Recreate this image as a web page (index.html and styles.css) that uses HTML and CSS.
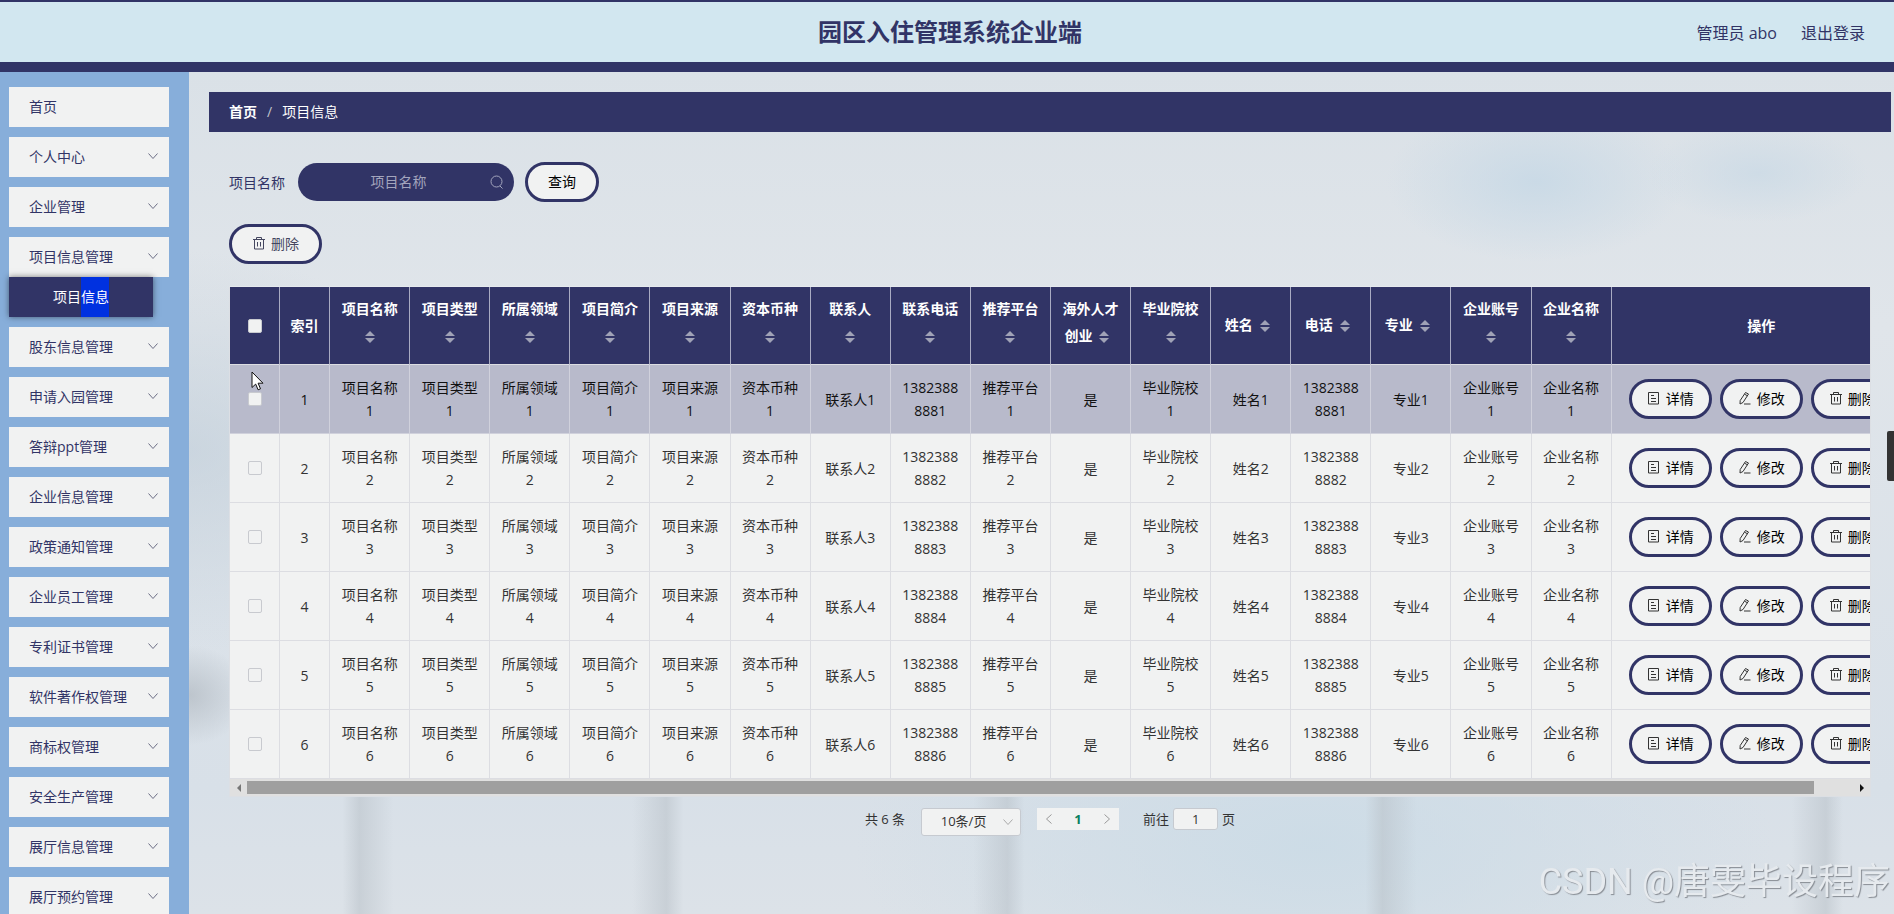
FILE: index.html
```html
<!DOCTYPE html>
<html lang="zh-CN">
<head>
    <meta charset="UTF-8">
    <meta name="viewport" content="width=device-width, initial-scale=1.0">
    <title>园区入住管理系统企业端</title>
    <link rel="stylesheet" href="styles.css">
</head>
<body>
    <svg class="sprite" aria-hidden="true">
      <symbol id="icon-arrow" viewBox="0 0 14 14"><path d="M2.5 4.5 7 9.5l4.5-5" fill="none" stroke="currentColor"/></symbol>
      <symbol id="icon-search" viewBox="0 0 14 14"><circle cx="6.5" cy="6.5" r="5.5" fill="none" stroke="currentColor"/><path d="m10 11 2.500 2.500" stroke="currentColor"/></symbol>
      <symbol id="icon-delete" viewBox="0 0 14 14"><path d="M1 3.500h12M4.500 3.500v-2h5v2M2.500 3.500v9.500h9V3.500M5.500 6v4.500M8.500 6v4.500" fill="none" stroke="currentColor"/></symbol>
      <symbol id="icon-detail" viewBox="0 0 14 14"><path d="M1.500 1.500h10v11.500h-10zM4 4.500h3M4 7.500h5M4 10.500h5" fill="none" stroke="currentColor"/></symbol>
      <symbol id="icon-edit" viewBox="0 0 14 14"><path d="M7.500 1.500 10.500 3 5 11.500 2 13l.2-3.500zM6.500 3.200l3 1.600M6 13h6.500" fill="none" stroke="currentColor"/></symbol>
    </svg>

    <header class="header">
      <h1 class="title">园区入住管理系统企业端</h1>
      <div class="user">
        <span>管理员 abo</span>
        <a href="#">退出登录</a>
      </div>
    </header>

    <div class="layout">
      <nav class="sidebar">
        <a class="menu-item" href="#">首页</a>
        <a class="menu-item" href="#">个人中心<svg class="icon"><use href="#icon-arrow"/></svg></a>
        <a class="menu-item" href="#">企业管理<svg class="icon"><use href="#icon-arrow"/></svg></a>
        <div class="menu-group">
          <a class="menu-item" href="#">项目信息管理<svg class="icon"><use href="#icon-arrow"/></svg></a>
          <a class="submenu-item" href="#">项目<span class="selected">信息</span></a>
        </div>
        <a class="menu-item" href="#">股东信息管理<svg class="icon"><use href="#icon-arrow"/></svg></a>
        <a class="menu-item" href="#">申请入园管理<svg class="icon"><use href="#icon-arrow"/></svg></a>
        <a class="menu-item" href="#">答辩ppt管理<svg class="icon"><use href="#icon-arrow"/></svg></a>
        <a class="menu-item" href="#">企业信息管理<svg class="icon"><use href="#icon-arrow"/></svg></a>
        <a class="menu-item" href="#">政策通知管理<svg class="icon"><use href="#icon-arrow"/></svg></a>
        <a class="menu-item" href="#">企业员工管理<svg class="icon"><use href="#icon-arrow"/></svg></a>
        <a class="menu-item" href="#">专利证书管理<svg class="icon"><use href="#icon-arrow"/></svg></a>
        <a class="menu-item" href="#">软件著作权管理<svg class="icon"><use href="#icon-arrow"/></svg></a>
        <a class="menu-item" href="#">商标权管理<svg class="icon"><use href="#icon-arrow"/></svg></a>
        <a class="menu-item" href="#">安全生产管理<svg class="icon"><use href="#icon-arrow"/></svg></a>
        <a class="menu-item" href="#">展厅信息管理<svg class="icon"><use href="#icon-arrow"/></svg></a>
        <a class="menu-item" href="#">展厅预约管理<svg class="icon"><use href="#icon-arrow"/></svg></a>
      </nav>

      <main class="main">
        <div class="breadcrumb">
          <a href="#">首页</a><span class="separator">/</span><span>项目信息</span>
        </div>

        <div class="content">
          <form class="search">
            <label for="name">项目名称</label>
            <div class="search-box">
              <input type="text" id="name" placeholder="项目名称">
              <svg class="icon"><use href="#icon-search"/></svg>
            </div>
            <button type="button" class="btn">查询</button>
          </form>

          <div class="toolbar">
            <button type="button" class="btn btn-plain"><svg class="icon"><use href="#icon-delete"/></svg>删除</button>
          </div>

          <div class="table-box">
            <div class="table-view">
              <table class="table">
                <colgroup>
                  <col class="col-small" span="2">
                  <col class="col-text" span="16">
                  <col class="col-action">
                </colgroup>
                <thead><tr id="table-head"></tr></thead>
                <tbody id="table-body"></tbody>
              </table>
            </div>
            <div class="scrollbar">
              <span class="scroll-arrow scroll-left"></span>
              <div class="scroll-track"><div class="scroll-thumb" style="width: 97.6%"></div></div>
              <span class="scroll-arrow scroll-right"></span>
            </div>
            <svg class="cursor" viewBox="0 0 13 20"><path d="M1 1v15.500l3.700-3.400 2.400 5.700 2.400-1-2.400-5.600h4.900z" fill="#fff" stroke="#111"/></svg>
          </div>

          <div class="pagination">
            <span class="total">共 6 条</span>
            <div class="page-size">
              <select aria-label="每页条数"><option>10条/页</option></select>
              <svg class="icon"><use href="#icon-arrow"/></svg>
            </div>
            <div class="pager">
              <button type="button" aria-label="上一页"><svg class="icon prev"><use href="#icon-arrow"/></svg></button>
              <button type="button" class="current">1</button>
              <button type="button" aria-label="下一页"><svg class="icon next"><use href="#icon-arrow"/></svg></button>
            </div>
            <div class="jump">
              <label for="page">前往</label>
              <input type="text" id="page" value="1">
              <span>页</span>
            </div>
          </div>
        </div>
      </main>
    </div>

    <div class="side-tab"></div>
    <div class="watermark">CSDN @唐雯毕设程序</div>

    <script>
      const columns = ['项目名称', '项目类型', '所属领域', '项目简介', '项目来源', '资本币种', '联系人', '联系电话',
        '推荐平台', '海外人才创业', '毕业院校', '姓名', '电话', '专业', '企业账号', '企业名称'];
      const actions = [['detail', '详情'], ['edit', '修改'], ['delete', '删除']];

      function cellText(column, n) {
        if (column === '联系电话' || column === '电话') return '1382388888' + n;
        if (column === '海外人才创业') return '是';
        return column + n;
      }

      document.getElementById('table-head').innerHTML =
        '<th><input type="checkbox" aria-label="全选"></th><th>索引</th>' +
        columns.map(c => `<th>${c}<span class="caret"></span></th>`).join('') +
        '<th>操作</th>';

      const buttons = actions.map(([icon, text]) =>
        `<button type="button" class="btn btn-small"><svg class="icon"><use href="#icon-${icon}"/></svg>${text}</button>`
      ).join('');

      document.getElementById('table-body').innerHTML = [1, 2, 3, 4, 5, 6].map(n =>
        `<tr class="${n === 1 ? 'hover' : ''}">
          <td><input type="checkbox" aria-label="选择第${n}行"></td><td>${n}</td>
          ${columns.map(c => `<td>${cellText(c, n)}</td>`).join('')}
          <td><div class="actions">${buttons}</div></td>
        </tr>`
      ).join('');
    </script>
</body>
</html>
```
FILE: styles.css
```css
* { box-sizing: border-box; }
body { margin: 0; height: 100vh; display: flex; flex-direction: column; overflow: hidden; font-family: "Open Sans", "Noto Sans CJK SC", sans-serif; font-size: 14px; color: #313466; }
a { color: inherit; text-decoration: none; }
button, input, select { font-family: inherit; font-size: inherit; }
.sprite { display: none; }
.icon { width: 14px; height: 14px; flex: none; }

/* header */
.header { flex: none; display: grid; grid-template-columns: 1fr auto 1fr; align-items: center; height: 72px; padding: 0 29px 0 35px; background: #d2e7f0; border-top: 2px solid #313466; border-bottom: 10px solid #313466; }
.title { grid-column: 2; margin: 0; font-size: 24px; line-height: 36px; }
.user { display: flex; justify-content: flex-end; gap: 24px; font-size: 16px; }

/* sidebar */
.layout { flex: 1; min-height: 0; display: flex; }
.sidebar { flex: none; width: 189px; display: flex; flex-direction: column; gap: 10px; padding: 15px 20px 0 9px; overflow: hidden; background: #87aeda; }
.menu-item { flex: none; display: flex; align-items: center; justify-content: space-between; height: 40px; padding: 0 9px 2px 20px; background: #f1f2f2; }
.menu-item .icon { color: #6d6f86; }
.submenu-item { display: block; width: 144px; height: 40px; line-height: 40px; text-align: center; color: #fff; background: #313466; box-shadow: 0 0 6px rgba(0, 0, 0, .5); }
.selected { display: inline-block; background: #0031e0; }

/* main */
.main {
  flex: 1; min-width: 0; padding: 20px 3px 0 20px;
  background:
    radial-gradient(ellipse 150px 80px at 79% 13%, rgba(200, 217, 230, .9), transparent),
    radial-gradient(ellipse 110px 50px at 92% 12%, rgba(205, 219, 230, .9), transparent),
    radial-gradient(ellipse 60px 50px at 0 74%, rgba(170, 178, 186, .6), transparent),
    linear-gradient(90deg, transparent 9%, rgba(185, 193, 200, .55) 10%, transparent 12%, transparent 26%, rgba(185, 193, 200, .55) 28%, transparent 29%, transparent 46%, rgba(185, 193, 200, .55) 48%, transparent 49%, transparent 69%, rgba(185, 193, 200, .55) 70%, transparent 72%, transparent 94%, rgba(185, 193, 200, .55) 96%, transparent 97%) 0 100% / 100% 130px no-repeat,
    radial-gradient(ellipse 460px 200px at 66% 92%, rgba(203, 219, 230, .9), transparent),
    radial-gradient(ellipse 260px 200px at 0 45%, rgba(190, 204, 216, .6), transparent),
    linear-gradient(180deg, #dae1e7, #e0e5ea 30%, #d8e0e8 85%, #dce2e8);
}
.breadcrumb { display: flex; align-items: center; height: 40px; padding: 0 20px 2px; color: #fff; background: #313466; }
.breadcrumb a { font-weight: bold; }
.separator { margin: 0 10px; color: #c0c4cc; }
.content { padding: 30px 20px 0; }

.search { display: flex; align-items: center; }
.search-box { position: relative; margin: 0 11px 0 13px; }
.search-box input { display: block; width: 216px; height: 38px; padding: 0 30px 2px 15px; border: none; border-radius: 19px; background: #313466; color: #fff; text-align: center; }
.search-box input::placeholder { color: #a3a5bd; }
.search-box .icon { position: absolute; right: 10px; top: 12px; color: #a3a5bd; }
.toolbar { display: flex; margin: 22px 0; }

.btn { display: flex; align-items: center; gap: 5px; height: 40px; padding: 0 20px 2px; border: 3px solid #313466; border-radius: 20px; background: #f1f2f2; color: #000; white-space: nowrap; cursor: pointer; }
.btn-plain { color: #44465f; }
.btn-small { padding: 0 15px 2px; }
.btn-small .icon { color: #333; }

/* table */
.table-box { position: relative; border: 1px solid #dcdfe4; border-top-color: #e6eaee; }
.table-view { overflow: hidden; }
.table { width: 1682px; table-layout: fixed; border-collapse: separate; border-spacing: 0; text-align: center; color: #333; }
.col-small { width: 50px; }
.col-text { width: 80px; }
.col-action { width: 300px; }
.table th, .table td { padding: 0 10px; line-height: 23px; word-break: break-all; border-right: 1px solid #dcdde2; border-bottom: 1px solid #dcdde2; }
.table th { height: 78px; color: #fff; background: #313466; border-right-color: #a9abc2; }
.table td { height: 69px; background: #f1f2f2; }
.table .hover td { color: #111; background: #b8bacb; border-color: #d0d1dc; }
.table input { appearance: none; display: block; width: 14px; height: 14px; margin: 0 auto; border: 1px solid #c8cacf; border-radius: 2px; background: #f1f2f2; }
.actions { display: flex; justify-content: center; gap: 8px; }

.caret { display: inline-flex; flex-direction: column; align-items: center; justify-content: center; gap: 2px; width: 24px; height: 34px; vertical-align: middle; }
.caret::before, .caret::after { content: ""; border: 5px solid transparent; }
.caret::before { border-top: 0; border-bottom-color: #a0a2b6; }
.caret::after { border-bottom: 0; border-top-color: #a0a2b6; }

.scrollbar { display: flex; align-items: center; height: 17px; background: #e0e0e0; }
.scroll-track { flex: 1; }
.scroll-thumb { height: 13px; background: #9f9f9f; }
.scroll-arrow { flex: none; width: 17px; }
.scroll-arrow::before { content: ""; display: block; width: 0; margin: 0 auto; border: 4px solid transparent; }
.scroll-left::before { border-left: 0; border-right-color: #777; }
.scroll-right::before { border-right: 0; border-left-color: #111; }
.cursor { position: absolute; left: 21px; top: 84px; width: 13px; height: 20px; }

/* pagination */
.pagination { display: flex; justify-content: center; align-items: flex-start; margin-top: 11px; font-size: 13px; line-height: 22px; color: #333; }
.page-size { position: relative; margin: 0 16px; }
.page-size select { appearance: none; display: block; width: 100px; height: 28px; padding: 0 30px 2px 15px; border: 1px solid #c6cad0; border-radius: 3px; background: #f1f2f2; color: #333; text-align: center; }
.page-size .icon { position: absolute; right: 6px; top: 7px; color: #aaa; }
.pager { display: flex; align-items: center; margin-right: 24px; background: #f1f2f2; }
.pager button { display: flex; align-items: center; justify-content: center; width: 24px; height: 22px; padding: 0; border: 0; background: none; color: #999; }
.pager .current { width: 34px; font-weight: bold; color: #0a8060; }
.pager .prev { transform: rotate(90deg); }
.pager .next { transform: rotate(-90deg); }
.jump { display: flex; gap: 4px; }
.jump input { width: 45px; height: 22px; padding: 0; border: 1px solid #c6cad0; border-radius: 3px; background: #f1f2f2; color: #333; text-align: center; }

.side-tab { position: fixed; right: 0; top: 431px; width: 7px; height: 50px; background: #333; border-radius: 2px 0 0 2px; }
.watermark { position: fixed; right: 4px; bottom: 8px; font-family: Roboto, "Noto Sans CJK SC", sans-serif; font-size: 36px; line-height: 48px; font-weight: 400; color: #e6eaee; text-shadow: 1px 1px 1px #888d94; }
```
